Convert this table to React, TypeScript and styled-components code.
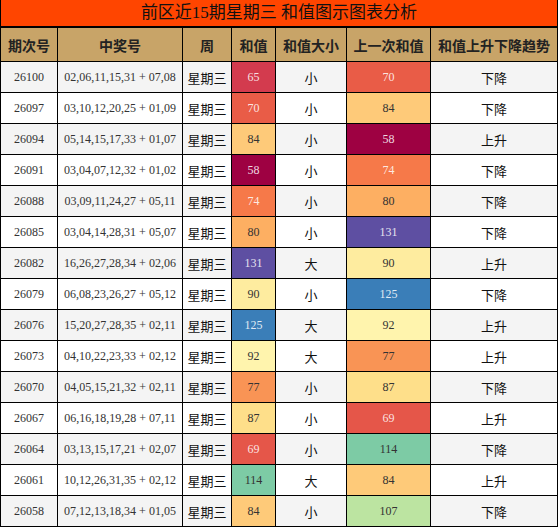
import React from 'react'
import styled, { createGlobalStyle } from 'styled-components'

type Draw = {
  issue: string
  nums: string
  sum: number
  size: string
  prev: number
  trend: string
}

const draws: Draw[] = [
  { issue: '26100', nums: '02,06,11,15,31 + 07,08', sum: 65, size: '小', prev: 70, trend: '下降' },
  { issue: '26097', nums: '03,10,12,20,25 + 01,09', sum: 70, size: '小', prev: 84, trend: '下降' },
  { issue: '26094', nums: '05,14,15,17,33 + 01,07', sum: 84, size: '小', prev: 58, trend: '上升' },
  { issue: '26091', nums: '03,04,07,12,32 + 01,02', sum: 58, size: '小', prev: 74, trend: '下降' },
  { issue: '26088', nums: '03,09,11,24,27 + 05,11', sum: 74, size: '小', prev: 80, trend: '下降' },
  { issue: '26085', nums: '03,04,14,28,31 + 05,07', sum: 80, size: '小', prev: 131, trend: '下降' },
  { issue: '26082', nums: '16,26,27,28,34 + 02,06', sum: 131, size: '大', prev: 90, trend: '上升' },
  { issue: '26079', nums: '06,08,23,26,27 + 05,12', sum: 90, size: '小', prev: 125, trend: '下降' },
  { issue: '26076', nums: '15,20,27,28,35 + 02,11', sum: 125, size: '大', prev: 92, trend: '上升' },
  { issue: '26073', nums: '04,10,22,23,33 + 02,12', sum: 92, size: '大', prev: 77, trend: '上升' },
  { issue: '26070', nums: '04,05,15,21,32 + 02,11', sum: 77, size: '小', prev: 87, trend: '下降' },
  { issue: '26067', nums: '06,16,18,19,28 + 07,11', sum: 87, size: '小', prev: 69, trend: '上升' },
  { issue: '26064', nums: '03,13,15,17,21 + 02,07', sum: 69, size: '小', prev: 114, trend: '下降' },
  { issue: '26061', nums: '10,12,26,31,35 + 02,12', sum: 114, size: '大', prev: 84, trend: '上升' },
  { issue: '26058', nums: '07,12,13,18,34 + 01,05', sum: 84, size: '小', prev: 107, trend: '下降' },
]

// spectral colour scale, low sums red -> high sums purple
const spectral = [
  '#9e0142', '#d53e4f', '#f46d43', '#fdae61', '#fee08b', '#ffffbf',
  '#e6f598', '#abdda4', '#66c2a5', '#3288bd', '#5e4fa2',
]
const MIN = 58
const MAX = 131

const hex = (c: string) => [1, 3, 5].map((i) => parseInt(c.slice(i, i + 2), 16))

const heat = (v: number) => {
  const t = Math.min(1, Math.max(0, (v - MIN) / (MAX - MIN))) * (spectral.length - 1)
  const i = Math.min(spectral.length - 2, Math.floor(t))
  const f = t - i
  const a = hex(spectral[i])
  const b = hex(spectral[i + 1])
  const rgb = a.map((x, k) => Math.round(x + (b[k] - x) * f))
  const lum = (0.299 * rgb[0] + 0.587 * rgb[1] + 0.114 * rgb[2]) / 255
  return { bg: `rgb(${rgb.join(',')})`, dark: lum < 0.63 }
}

const widths = [57, 125, 49, 44, 71, 84, 127]
const headers = ['期次号', '中奖号', '周', '和值', '和值大小', '上一次和值', '和值上升下降趋势']

const App = () => {
  return (
    <>
      <GlobalStyle />
      <Wrap>
        <Title>前区近15期星期三 和值图示图表分析</Title>
        <Table>
          <colgroup>
            {widths.map((w, i) => (
              <col key={i} style={{ width: w }} />
            ))}
          </colgroup>
          <thead>
            <tr>
              {headers.map((h) => (
                <HeadCell key={h}>{h}</HeadCell>
              ))}
            </tr>
          </thead>
          <tbody>
            {draws.map((d, i) => {
              const cur = heat(d.sum)
              const prev = heat(d.prev)
              return (
                <Row key={d.issue} $striped={i % 2 === 0}>
                  <NumCell>{d.issue}</NumCell>
                  <NumCell>{d.nums}</NumCell>
                  <TextCell>星期三</TextCell>
                  <HeatCell $bg={cur.bg} $light={cur.dark}>
                    {d.sum}
                  </HeatCell>
                  <TextCell>{d.size}</TextCell>
                  <HeatCell $bg={prev.bg} $light={prev.dark}>
                    {d.prev}
                  </HeatCell>
                  <TextCell>{d.trend}</TextCell>
                </Row>
              )
            })}
          </tbody>
        </Table>
      </Wrap>
    </>
  )
}

const GlobalStyle = createGlobalStyle`
  body {
    margin: 0;
    background: #fff;
    font-family: "Noto Sans CJK SC", "Noto Sans", sans-serif;
  }
`

const Wrap = styled.div`
  width: 558px;
`

const Title = styled.div`
  height: 26px;
  line-height: 26px;
  background: #ff4500;
  color: #111;
  text-align: center;
  font-size: 17px;
  font-family: "Liberation Serif", "Noto Sans CJK SC", serif;
  border-left: 1px solid #000;
  border-right: 1px solid #000;
  border-bottom: 2px solid #000;
`

const Table = styled.table`
  width: 558px;
  border-collapse: collapse;
  table-layout: fixed;
`

const HeadCell = styled.th`
  height: 33px;
  padding: 0;
  background: #c8a468;
  color: #222;
  font-size: 14px;
  font-weight: 700;
  font-family: "Noto Sans CJK SC", sans-serif;
  text-align: center;
  border: 1px solid #000;
  border-top: none;
`

const Row = styled.tr<{ $striped: boolean }>`
  background: ${(p) => (p.$striped ? '#f4f4f4' : '#fff')};
`

const Cell = styled.td`
  height: 30px;
  padding: 0;
  text-align: center;
  border: 1px solid #000;
  white-space: nowrap;
`

const NumCell = styled(Cell)`
  font-family: "Liberation Serif", serif;
  font-size: 12px;
  color: #333;
`

const TextCell = styled(Cell)`
  font-family: "Noto Sans CJK SC", sans-serif;
  font-size: 13px;
  color: #111;
`

const HeatCell = styled(Cell)<{ $bg: string; $light: boolean }>`
  background: ${(p) => p.$bg};
  color: ${(p) => (p.$light ? 'rgba(255,255,255,0.85)' : '#333')};
  font-family: "Liberation Serif", serif;
  font-size: 12px;
`

export default App
